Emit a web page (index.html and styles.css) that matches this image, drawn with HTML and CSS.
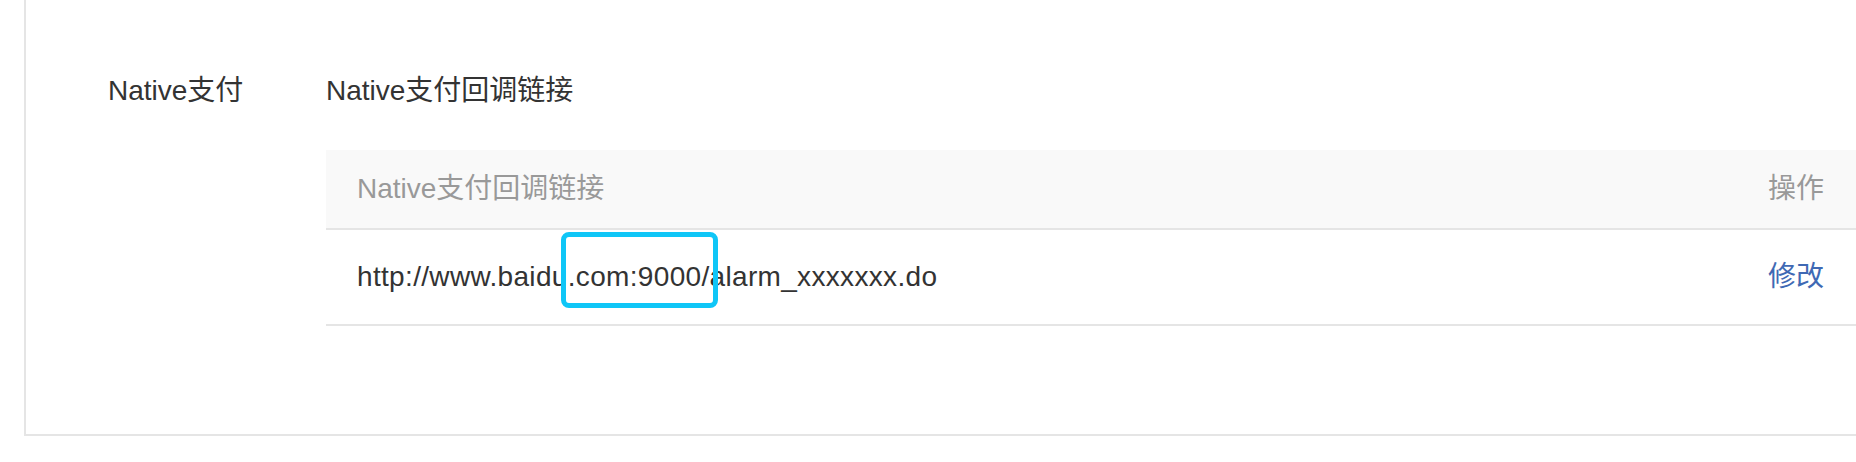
FILE: index.html
```html
<!DOCTYPE html>
<html lang="zh-CN">
<head>
<meta charset="utf-8">
<title>Native支付</title>
<link rel="stylesheet" href="styles.css">
</head>
<body>
<div class="panel">
  <div class="setting">
    <div class="setting-label">Native支付</div>
    <div class="setting-body">
      <div class="setting-title">Native支付回调链接</div>
      <div class="table">
        <div class="table-head">
          <div class="cell-main">Native支付回调链接</div>
          <div class="cell-op">操作</div>
        </div>
        <div class="table-row">
          <div class="cell-main url">http://www.baidu.com:9000/alarm_xxxxxxx.do</div>
          <div class="cell-op"><a class="link">修改</a></div>
          <div class="highlight"></div>
        </div>
      </div>
    </div>
  </div>
</div>
</body>
</html>
```
FILE: styles.css
```css
html, body {
  margin: 0;
  padding: 0;
  background: #ffffff;
}
body {
  font-family: "Liberation Sans", "Noto Sans CJK SC", sans-serif;
  font-size: 28px;
  color: #333333;
  overflow: hidden;
}
.panel {
  margin-left: 24px;
  height: 434px;
  border-left: 2px solid #e5e5e5;
  border-bottom: 2px solid #e5e5e5;
}
.setting {
  display: flex;
  padding-top: 71px;
}
.setting-label {
  width: 218px;
  padding-left: 82px;
  line-height: 40px;
  height: 40px;
}
.setting-body {
  flex: 1;
}
.setting-title {
  line-height: 40px;
  height: 40px;
  margin-bottom: 39px;
}
.table-head,
.table-row {
  display: flex;
  align-items: center;
  padding: 0 32px 0 31px;
  position: relative;
}
.table-head {
  height: 78px;
  background: #f9f9f9;
  border-bottom: 2px solid #e5e5e5;
  color: #999999;
}
.table-row {
  height: 94px;
  border-bottom: 2px solid #e5e5e5;
}
.cell-main {
  flex: 1;
  line-height: 40px;
}
.url {
  letter-spacing: 0.33px;
}
.cell-op {
  line-height: 40px;
}
.link {
  color: #3f69b4;
  cursor: pointer;
}
.highlight {
  position: absolute;
  left: 235px;
  top: 2px;
  width: 147px;
  height: 66px;
  border: 5px solid #0fc6f7;
  border-radius: 8px;
}
```
